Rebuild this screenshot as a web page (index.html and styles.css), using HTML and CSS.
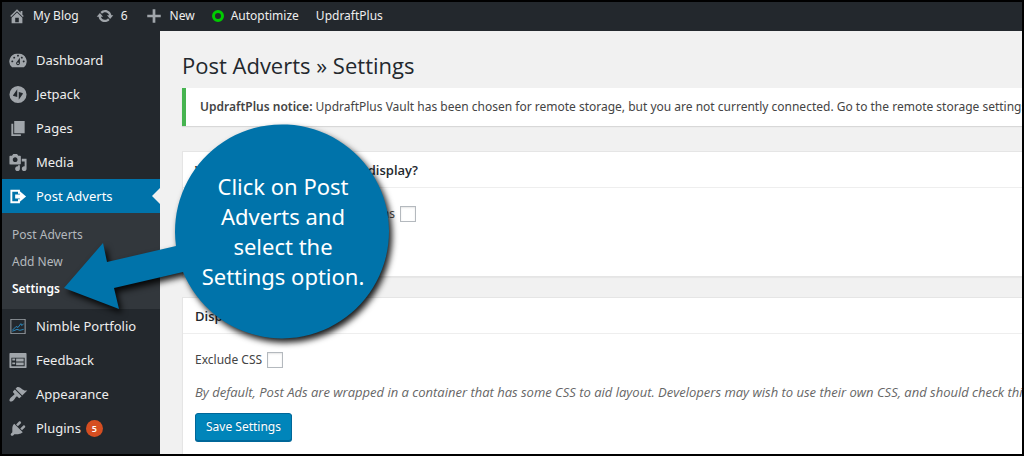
FILE: index.html
```
<!DOCTYPE html>
<html lang="en">
<head>
<meta charset="UTF-8">
<meta name="viewport" content="width=device-width, initial-scale=1.0">
<title>Post Adverts » Settings</title>
<link rel="stylesheet" href="styles.css">
</head>
<body>
<header class="adminbar">
    <a href="#" class="bar-item">
        <svg class="icon" viewBox="0 0 20 20"><path d="M16 8.5l1.53 1.53-1.06 1.06L10 4.6l-6.47 6.49-1.06-1.06L10 2.5l4 4v-2h2v4zm-6-2.46l6 5.99V18H4v-5.97zM12 17v-5H8v5h4z"/></svg>
        My Blog
    </a>
    <a href="#" class="bar-item">
        <svg class="icon" viewBox="0 0 20 20"><path d="M10.2 3.28c3.53 0 6.43 2.61 6.92 6h2.08l-3.5 4-3.5-4h2.32c-.45-1.97-2.21-3.45-4.32-3.45-1.45 0-2.73.71-3.54 1.78L4.95 5.66C6.23 4.2 8.11 3.28 10.2 3.28zm-.4 13.44c-3.52 0-6.43-2.61-6.92-6H.8l3.5-4c1.17 1.33 2.33 2.67 3.5 4H5.48c.45 1.97 2.21 3.45 4.32 3.45 1.45 0 2.73-.71 3.54-1.78l1.71 1.95c-1.28 1.46-3.15 2.38-5.25 2.38z"/></svg>
        6
    </a>
    <a href="#" class="bar-item">
        <svg class="icon" viewBox="0 0 20 20"><path d="M17.500 8.500v3h-6v6h-3v-6h-6v-3h6v-6h3v6z"/></svg>
        New
    </a>
    <a href="#" class="bar-item">
        <span class="ring"></span>
        Autoptimize
    </a>
    <a href="#" class="bar-item">UpdraftPlus</a>
</header>

<div class="layout">
    <nav class="sidebar">
        <a href="#" class="menu-item">
            <svg class="icon" viewBox="0 0 20 20"><path fill-rule="evenodd" d="M3.76 17h12.48A7.998 7.998 0 0 0 10 3a7.998 7.998 0 0 0-6.24 14zM10 4c.55 0 1 .45 1 1s-.45 1-1 1-1-.45-1-1 .45-1 1-1zM6 6c.55 0 1 .45 1 1s-.45 1-1 1-1-.45-1-1 .45-1 1-1zm8 0c.55 0 1 .45 1 1s-.45 1-1 1-1-.45-1-1 .45-1 1-1zm-5.370 5.550L12 7v6c0 1.100-.9 2-2 2s-2-.9-2-2c0-.57.24-1.080.63-1.450zM4 10c.55 0 1 .45 1 1s-.45 1-1 1-1-.45-1-1 .45-1 1-1zm12 0c.55 0 1 .45 1 1s-.45 1-1 1-1-.45-1-1 .45-1 1-1zm-5 3c0-.55-.45-1-1-1s-1 .45-1 1 .45 1 1 1 1-.45 1-1z"/></svg>
            Dashboard
        </a>
        <a href="#" class="menu-item">
            <svg class="icon" viewBox="0 0 20 20"><path fill-rule="evenodd" d="M10 1a9 9 0 1 0 0 18 9 9 0 0 0 0-18zM9.200 4.500v8.200l-3.800-1c-.6-.2-.7-.7-.4-1.200zM10.800 15.500V7.300l3.800 1c.6.2.7.7.4 1.200z"/></svg>
            Jetpack
        </a>
        <a href="#" class="menu-item">
            <svg class="icon" viewBox="0 0 20 20"><path d="M6 15V2h11v13H6zm-1 1h8v2H3V5h2v11z"/></svg>
            Pages
        </a>
        <a href="#" class="menu-item">
            <svg class="icon" viewBox="0 0 20 20"><path fill-rule="evenodd" d="M13 11V4c0-.55-.45-1-1-1h-1.670L9 1H5L3.670 3H2c-.55 0-1 .45-1 1v7c0 .55.45 1 1 1h10c.55 0 1-.45 1-1zM7 4.500c1.380 0 2.500 1.120 2.500 2.500S8.380 9.500 7 9.500 4.500 8.380 4.500 7 5.620 4.500 7 4.500zM14 6h5v10.500c0 1.380-1.120 2.500-2.500 2.500S14 17.880 14 16.500s1.120-2.500 2.500-2.500c.17 0 .34.020.5.050V9h-3V6zm-4 8.050V13h2v3.500c0 1.380-1.120 2.500-2.500 2.500S7 17.880 7 16.500 8.120 14 9.500 14c.17 0 .34.020.5.050z"/></svg>
            Media
        </a>
        <a href="#" class="menu-item current">
            <svg class="icon" viewBox="0 0 20 20"><path d="M2 3h10v4h-2V5H4v10h6v-2h2v4H2zM7 8h5V4.500l6.500 5.500-6.500 5.500V12H7z"/></svg>
            Post Adverts
        </a>
        <div class="submenu">
            <a href="#">Post Adverts</a>
            <a href="#">Add New</a>
            <a href="#" class="selected">Settings</a>
        </div>
        <a href="#" class="menu-item">
            <svg class="icon" viewBox="0 0 20 20"><path d="M2 2h16v16H2zm1 1v14h14V3z" fill-rule="evenodd"/><path d="M4 14l4-4 2 1 3-4 1 2 2-2M4 15l5-2 3 1 4-1" class="nimble-line"/></svg>
            Nimble Portfolio
        </a>
        <a href="#" class="menu-item">
            <svg class="icon" viewBox="0 0 20 20"><path fill-rule="evenodd" d="M2 2h16c.55 0 1 .45 1 1v14c0 .55-.45 1-1 1H2c-.55 0-1-.45-1-1V3c0-.55.45-1 1-1zm15 14V7H3v9h14zM4 8v2h3V8H4zm4 0v3h8V8H8zm-4 4v2h3v-2H4zm4 0v3h8v-3H8z"/></svg>
            Feedback
        </a>
        <a href="#" class="menu-item">
            <svg class="icon" viewBox="0 0 20 20"><path d="M14.480 11.060L7.410 3.990l1.500-1.500c.5-.56 2.300-.47 3.510.32 1.210.8 1.430 1.280 2.910 2.100 1.180.64 2.450 1.260 4.450.85zm-.71.71L6.700 4.700 4.930 6.470c-.39.39-.39 1.020 0 1.410l1.060 1.060c.39.39.39 1.030 0 1.420-.6.6-1.430 1.110-2.210 1.690-.35.26-.7.53-1.010.84C1.430 14.230.4 16.080 1.400 17.070c.99 1 2.840-.03 4.180-1.360.31-.31.58-.66.85-1.020.57-.78 1.080-1.610 1.690-2.210.39-.39 1.020-.39 1.410 0l1.060 1.060c.39.39 1.020.39 1.410 0z"/></svg>
            Appearance
        </a>
        <a href="#" class="menu-item">
            <svg class="icon" viewBox="0 0 20 20"><path d="M13.110 4.360L9.870 7.600 8 5.730l3.240-3.240c.35-.34 1.050-.2 1.560.32.52.51.66 1.210.31 1.550zm-8 1.770l.91-1.120 9.010 9.010-1.190.84c-.71.71-2.630 1.160-3.820 1.160H6.140L4.900 17.260c-.59.59-1.540.59-2.120 0-.59-.58-.59-1.530 0-2.120l1.240-1.240v-3.880c0-1.130.4-3.190 1.090-3.890zm7.260 3.970l3.240-3.240c.34-.35 1.040-.21 1.550.31.52.51.66 1.210.31 1.550l-3.240 3.250z"/></svg>
            Plugins <span class="count">5</span>
        </a>
        <a href="#" class="menu-item" aria-label="Users">
            <svg class="icon" viewBox="0 0 20 20"><path d="M10 9.250c-2.270 0-2.730-3.440-2.730-3.440C7 4.020 7.820 2 9.970 2c2.160 0 2.980 2.020 2.710 3.810 0 0-.41 3.440-2.680 3.440zm0 2.570L12.720 10c2.390 0 4.520 2.330 4.520 4.530v2.490s-3.650 1.130-7.240 1.130c-3.650 0-7.240-1.130-7.240-1.130v-2.490c0-2.250 1.940-4.480 4.470-4.480z"/></svg>
        </a>
    </nav>

    <main class="content">
        <h1>Post Adverts » Settings</h1>
        <div class="notice"><strong>UpdraftPlus notice:</strong> UpdraftPlus Vault has been chosen for remote storage, but you are not currently connected. Go to the remote storage settings in order to connect.</div>

        <form action="#" method="post">
            <section class="postbox display-on">
                <h2>Where should Post Adverts display?</h2>
                <div class="inside">
                    <label for="admins">Show adverts for logged on admins</label>
                    <input type="checkbox" id="admins">
                </div>
            </section>
            <section class="postbox">
                <h2>Display Settings</h2>
                <div class="inside">
                    <label for="css">Exclude CSS</label>
                    <input type="checkbox" id="css">
                    <p class="description">By default, Post Ads are wrapped in a container that has some CSS to aid layout. Developers may wish to use their own CSS, and should check this Exclude CSS option.</p>
                    <button type="submit" class="button">Save Settings</button>
                </div>
            </section>
        </form>
    </main>
</div>

<!-- help callout over the page -->
<div class="callout">
    <svg class="callout-shape" viewBox="0 0 340 230"><path d="M2 168L41 123L45 142L114 126A107 107 0 1 1 121 152L52 168L57 189Z"/></svg>
    <p class="callout-text">Click on Post<br>Adverts and<br>select the<br>Settings option.</p>
</div>
</body>
</html>
```
FILE: styles.css
```
* {
    box-sizing: border-box;
}

body {
    display: flex;
    flex-direction: column;
    position: relative;
    height: 100vh;
    margin: 0;
    border: 2px solid #000;
    overflow: hidden;
    background-color: #f1f1f1;
    color: #444;
    font-family: "Segoe UI", "Noto Sans", sans-serif;
    font-size: 12px;
    line-height: 18px;
}

a {
    color: #eee;
    text-decoration: none;
}

.icon {
    flex: none;
    width: 20px;
    height: 20px;
    fill: #a0a5aa;
}

/* top bar */
.adminbar {
    display: flex;
    flex: none;
    align-items: center;
    gap: 17px;
    height: 29px;
    padding: 0 6px 2px;
    background-color: #23282d;
}

.bar-item {
    display: flex;
    align-items: center;
    gap: 7px;
}

.bar-item .icon {
    width: 18px;
    height: 18px;
}

.ring {
    width: 12px;
    height: 12px;
    border: 3px solid #0c0;
    border-radius: 50%;
}

.layout {
    display: flex;
    flex: 1;
    min-height: 0;
}

/* left menu */
.sidebar {
    flex: none;
    width: 158px;
    padding-top: 12px;
    background-color: #23282d;
}

.menu-item {
    display: flex;
    align-items: center;
    gap: 8px;
    height: 34px;
    padding-left: 6px;
    font-size: 13px;
}

.menu-item .icon {
    height: 19px;
}

.current {
    position: relative;
    background-color: #0073aa;
    color: #fff;
}

.current .icon {
    fill: #fff;
}

.current::after {
    content: "";
    position: absolute;
    right: 0;
    border: 8px solid transparent;
    border-left: 0;
    border-right-color: #f1f1f1;
}

.submenu {
    padding: 8px 0 7px 10px;
    background-color: #32373c;
}

.submenu a {
    display: block;
    color: #b4b9be;
    line-height: 27px;
}

.submenu .selected {
    color: #fff;
    font-weight: 600;
}

.nimble-line {
    fill: none;
    stroke: #2a8cc4;
}

.count {
    width: 17px;
    margin-left: -3px;
    border-radius: 50%;
    background-color: #d54e21;
    color: #fff;
    font-size: 9px;
    font-weight: 600;
    line-height: 17px;
    text-align: center;
}

/* settings page */
.content {
    flex: 1;
    min-width: 0;
    padding: 19px 0 0 22px;
    white-space: nowrap;
}

h1 {
    margin: 0 0 8px;
    color: #23282d;
    font-family: "Segoe UI", "Open Sans", sans-serif;
    font-size: 22px;
    font-weight: 400;
    line-height: 30px;
}

.notice {
    padding: 10px 14px;
    border-left: 4px solid #46b450;
    background-color: #fff;
    box-shadow: 0 1px 1px rgba(0, 0, 0, 0.1);
    overflow: hidden;
}

strong {
    font-weight: 600;
}

form {
    margin-top: 25px;
}

.postbox {
    margin-bottom: 20px;
    border: 1px solid #e5e5e5;
    border-right: 0;
    background-color: #fff;
    box-shadow: 0 1px 1px rgba(0, 0, 0, 0.04);
}

.display-on {
    min-height: 126px;
}

h2 {
    margin: 0;
    padding: 9px 12px 8px;
    border-bottom: 1px solid #eee;
    color: #23282d;
    font-family: "Segoe UI", "Open Sans", sans-serif;
    font-size: 13px;
    font-weight: 600;
    line-height: 18px;
}

.inside {
    padding: 16px 12px;
    overflow: hidden;
}

.inside label {
    margin-right: 2px;
}

.inside label,
.inside input {
    vertical-align: middle;
}

input[type="checkbox"] {
    appearance: none;
    width: 16px;
    height: 16px;
    margin: 0;
    border: 1px solid #b4b9be;
    background-color: #fff;
    box-shadow: inset 0 1px 2px rgba(0, 0, 0, 0.1);
}

.description {
    margin: 14px 0 12px;
    color: #666;
    font-family: "Segoe UI", "Open Sans", sans-serif;
    font-size: 13px;
    font-style: italic;
}

.button {
    height: 28px;
    padding: 0 10px;
    border: 1px solid #006799;
    border-radius: 3px;
    background-color: #0085ba;
    box-shadow: 0 1px 0 #006799;
    color: #fff;
    font: inherit;
    text-shadow: 0 -1px 1px #006799;
}

/* callout */
.callout {
    position: absolute;
    top: 118px;
    left: 60px;
    width: 340px;
}

.callout-shape {
    display: block;
    overflow: visible;
    fill: #0073aa;
    filter: drop-shadow(3px 4px 3px rgba(0, 0, 0, 0.9));
}

.callout-text {
    position: absolute;
    top: 51px;
    left: 121px;
    width: 200px;
    margin: 0;
    color: #fff;
    font-size: 22px;
    line-height: 30px;
    text-align: center;
}
```
